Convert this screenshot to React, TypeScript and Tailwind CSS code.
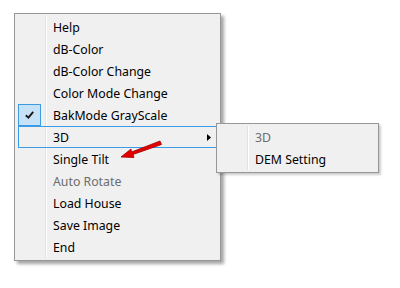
import React from "react";

type Item = { label: string; disabled?: boolean; checked?: boolean; sub?: boolean; hot?: boolean };

const main: Item[] = [
  { label: "Help" },
  { label: "dB-Color" },
  { label: "dB-Color Change" },
  { label: "Color Mode Change" },
  { label: "BakMode GrayScale", checked: true },
  { label: "3D", sub: true, hot: true },
  { label: "Single Tilt" },
  { label: "Auto Rotate", disabled: true },
  { label: "Load House" },
  { label: "Save Image" },
  { label: "End" },
];

const subItems: Item[] = [{ label: "3D", disabled: true }, { label: "DEM Setting" }];

function Row({ item }: { item: Item }) {
  return (
    <div
      className={
        "relative flex h-[22px] items-center " +
        (item.hot ? "outline outline-1 -outline-offset-1 outline-[#3c9be5]" : "")
      }
    >
      <div className="flex h-full w-[23px] shrink-0 items-center justify-center">
        {item.checked && (
          <div className="flex h-[22px] w-[23px] items-center justify-center border border-[#3d9be3] bg-[#c7e2f7]">
            <svg width="9" height="8" viewBox="0 0 9 8">
              <path d="M0.8 4.2 L3.4 6.6 L8.2 0.8" fill="none" stroke="#1a1a1a" strokeWidth="1.9" />
            </svg>
          </div>
        )}
      </div>
      <div className="ml-[4px] h-full w-px bg-[#e2e2e2]" />
      <div className="h-full w-px bg-white" />
      <span
        className={
          "ml-[6px] pt-[2px] text-[12.3px] leading-none " +
          (item.disabled ? "text-[#6d6d6d]" : "text-[#000]")
        }
      >
        {item.label}
      </span>
      {item.sub && (
        <svg className="absolute right-[6px] top-[8px]" width="4" height="7" viewBox="0 0 4 7">
          <path d="M0 0 L4 3.5 L0 7 Z" fill="#000" />
        </svg>
      )}
    </div>
  );
}

export default function App() {
  return (
    <div
      className="relative h-[288px] w-[400px] overflow-hidden bg-white"
      style={{ fontFamily: '"Noto Sans", "Open Sans", sans-serif' }}
    >
      <div className="absolute left-[14px] top-[13px] w-[207px] border border-[#979797] bg-[#f0f0f0] px-[3px] py-[2px] shadow-[3px_3px_3px_rgba(0,0,0,0.35)]">
        {main.map((m) => (
          <Row key={m.label} item={m} />
        ))}
      </div>
      <div className="absolute left-[216px] top-[123px] w-[163px] border border-[#979797] bg-[#f0f0f0] px-[3px] py-[2px] shadow-[2px_2px_2px_rgba(0,0,0,0.2)]">
        {subItems.map((m) => (
          <Row key={m.label} item={m} />
        ))}
      </div>
      <svg className="absolute left-0 top-0" width="400" height="288" viewBox="0 0 400 288">
        <path
          d="M121 157 L131 149 L131.5 152 L160 141 L161.5 144.5 L133 154.5 L134 157.5 Z"
          fill="#e50000"
          stroke="#a00000"
          strokeWidth="0.8"
        />
      </svg>
    </div>
  );
}
